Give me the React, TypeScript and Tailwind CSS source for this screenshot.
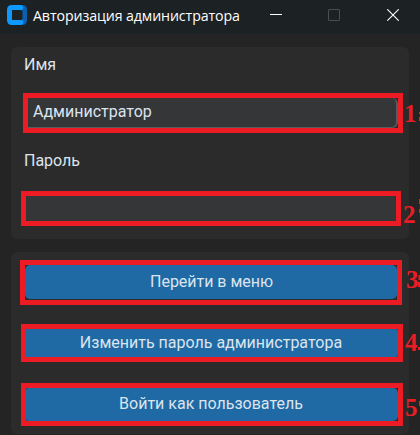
import React from "react";

const roboto = "font-['Roboto','Noto_Sans',sans-serif]";

function TitleBar() {
  return (
    <header className="relative flex h-[34px] items-center bg-[#1c2124] pl-[7px]">
      <svg width="20" height="20" viewBox="0 0 20 20" className="relative -top-[2px] shrink-0">
        <rect x="6" y="0" width="14" height="20" rx="4.5" fill="#0a5fae" />
        <path d="M5 0H14Q16.5 .5 16.5 3L15 5H5V15H15L16.5 17Q16.5 19.5 14 20H5Q0 20 0 15V5Q0 0 5 0Z" fill="#0d99ff" />
        <rect x="5" y="5" width="10.5" height="10" rx="2" fill="#1c2124" />
      </svg>
      <h1 className="ml-[6px] w-[208px] whitespace-nowrap pb-[2px] font-['Open_Sans','Noto_Sans',sans-serif] text-[14.2px] leading-5 tracking-[-0.1px] text-white">
        Авторизация администратора
      </h1>
      <div className="ml-auto flex items-center pb-[4px] pr-[21px]">
        <svg width="12" height="12" viewBox="0 0 12 12" className="mr-[46px]"><path d="M0 5.5H12" stroke="#fff" /></svg>
        <svg width="12" height="12" viewBox="0 0 12 12" className="mr-[47px]"><rect x=".5" y=".5" width="11" height="11" rx=".5" fill="none" stroke="#4b4f51" /></svg>
        <svg width="12" height="12" viewBox="0 0 12 12"><path d="M.3.3L11.7 11.7M11.7.3L.3 11.7" stroke="#fff" strokeWidth="1.1" /></svg>
      </div>
    </header>
  );
}

function Mark({ text, className }: { text: string; className: string }) {
  return (
    <span className={`absolute whitespace-nowrap font-['Liberation_Serif',serif] text-[25px] font-bold leading-none text-[#e91d25] ${className}`}>
      {text}
    </span>
  );
}

export default function App() {
  return (
    <main className={`relative h-[435px] w-[420px] overflow-hidden bg-[#242424] text-[16px] text-[#dce4ee] ${roboto}`}>
      <TitleBar />
      <section className="ml-[11px] mt-[13px] flex h-[192px] w-[398px] flex-col rounded-[6px] bg-[#2b2b2b]">
        <label className="ml-[13px] mt-[8px] h-5 leading-5">Имя</label>
        <div className="ml-3 mt-[18px] h-10 w-[380px] border-[5px] border-[#ed1c24]">
          <div className="flex h-[30px] items-center rounded-r-[6px] border-b border-r-2 border-[#565b5e] bg-[#343638] pb-[1px] pl-[5px]">Администратор</div>
        </div>
        <label className="ml-[13px] mt-[18px] h-5 leading-5">Пароль</label>
        <div className="ml-[10px] mt-[20px] h-[35px] w-[380px] border-[5px] border-[#ed1c24]">
          <div className="h-full rounded-[2px] bg-[#343638]" />
        </div>
      </section>
      <section className="ml-[11px] mt-[13px] flex h-[182px] w-[398px] flex-col rounded-[6px] bg-[#2b2b2b]">
        <div className="ml-[9px] mt-2 h-[45px] w-[382px] border-[5px] border-[#ed1c24]">
          <button className="block h-[34px] w-full rounded-[5px] bg-[#1f6aa5] pl-[1px] tracking-[-0.03px]">Перейти в меню</button>
        </div>
        <div className="ml-[10px] mt-[19px] h-[38px] w-[382px] border-[5px] border-[#ed1c24]">
          <button className="block h-full w-full rounded-r-[2px] bg-[#1f6aa5] pr-[2px]">Изменить пароль администратора</button>
        </div>
        <div className="ml-[10px] mt-[21px] h-[43px] w-[382px] border-[5px] border-[#ed1c24]">
          <button className="block h-full w-full rounded-l-[2px] rounded-r-[5px] bg-[#1f6aa5] pb-[2px] pr-[2px]">Войти как пользователь</button>
        </div>
      </section>
      <Mark text="1" className="left-[404px] top-[101px]" />
      <Mark text="2" className="left-[403px] top-[202px]" />
      <Mark text="3" className="left-[406px] top-[267px]" />
      <Mark text="4" className="left-[405px] top-[330px]" />
      <Mark text="5" className="left-[405px] top-[395px]" />
      <svg width="3" height="320" viewBox="0 0 3 320" className="absolute left-[417px] top-[100px]" fill="#e91d25">
        <path d="M2 12H3V14H2ZM2 17H3V21H2ZM2 99H3V104H2ZM2 109H3V113H2ZM1.5 175H3V180H1.5ZM1 182H3V187H1ZM1 247H3V250H1ZM2 301H3V306H2Z" />
      </svg>
    </main>
  );
}
